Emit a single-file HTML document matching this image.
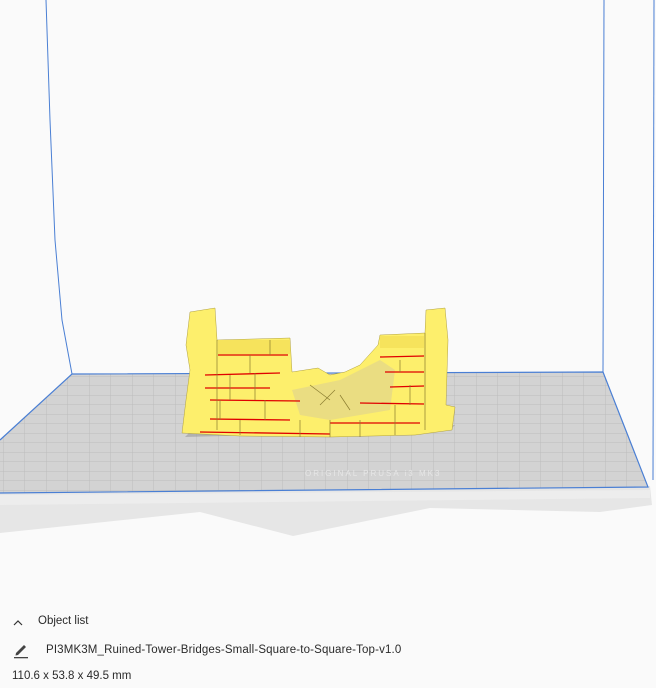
<!DOCTYPE html>
<html><head><meta charset="utf-8"><style>
html,body{margin:0;padding:0;background:#fafafa;width:656px;height:688px;overflow:hidden;font-family:"Liberation Sans","DejaVu Sans",sans-serif;}
.t{position:absolute;font-size:11.5px;color:#2a2a2a;white-space:nowrap;}
</style></head><body>
<svg width="656" height="688" style="position:absolute;left:0;top:0">
<defs>
<pattern id="g" width="21.5" height="9.5" patternUnits="userSpaceOnUse" x="3" y="376">
<rect width="21.5" height="9.5" fill="#d3d3d3"/>
<path d="M0 0H21.5M0 0V9.5" stroke="#bcbcbc" stroke-width="1"/>
</pattern>
</defs>
<polygon points="0,490 650,486 652,505 600,512 430,508 293,536 200,512 0,533" fill="#e6e6e6"/>
<polygon points="0,495 650,490 650,498 0,505" fill="#ededed"/>
<polygon points="72,374 603,372 648,487 0,493 0,440" fill="url(#g)"/>
<polyline points="0,440 72,374 603,372 648,487 0,493" fill="none" stroke="#4a7fd4" stroke-width="1.2"/>
<polyline points="46,0 50,120 55,240 62,320 72,374" fill="none" stroke="#4a7fd4" stroke-width="1"/>
<line x1="604" y1="0" x2="603" y2="372" stroke="#4a7fd4" stroke-width="1"/>
<line x1="654" y1="0" x2="653" y2="480" stroke="#4a7fd4" stroke-width="1"/>
<text x="305" y="476" font-size="8" fill="#e6e6e6" letter-spacing="2" font-family="Liberation Sans">ORIGINAL PRUSA i3 MK3</text>
<polygon points="185,437 450,430 455,425 190,432" fill="#8f8f8f" opacity="0.5"/>
<polygon points="190,312 215,308 217,340 290,338 292,372 318,368 330,375 345,372 360,365 378,345 380,335 425,333 426,310 445,308 448,340 446,405 455,407 452,430 415,435 330,437 240,436 182,433 186,400 190,370 186,345" fill="#fdef6c" stroke="#b0a040" stroke-width="0.5"/>
<g fill="#f6e35c">
<rect x="218" y="340" width="72" height="14"/>
<rect x="380" y="336" width="44" height="12"/>
<polygon points="292,390 340,380 380,360 395,370 390,410 330,420 300,415" fill="#eadd82"/>
</g>
<g stroke="#e00000" stroke-width="1.3">
<line x1="218" y1="355" x2="288" y2="355"/>
<line x1="205" y1="375" x2="280" y2="373"/>
<line x1="205" y1="388" x2="270" y2="388"/>
<line x1="210" y1="400" x2="300" y2="401"/>
<line x1="210" y1="419" x2="290" y2="420"/>
<line x1="330" y1="423" x2="420" y2="423"/>
<line x1="380" y1="357" x2="424" y2="356"/>
<line x1="385" y1="372" x2="424" y2="372"/>
<line x1="390" y1="387" x2="424" y2="386"/>
<line x1="360" y1="403" x2="424" y2="404"/>
<line x1="200" y1="432" x2="330" y2="434"/>
</g>
<g stroke="#8a7c30" stroke-width="0.7" fill="none">
<path d="M230 375V400M255 373V400M220 400V420M265 400V420M240 420V435M300 420V437M330 420V437M360 420V437M395 405V435M410 385V405M400 360V372M250 355V373M270 340V355M310 385L330 400M340 395L350 410M320 405L335 390"/>
<path d="M217 340V430M425 333V430"/>
</g>
<path d="M14 625 L18 621 L22 625" fill="none" stroke="#333" stroke-width="1.2"/>
<path d="M16 653 L24 645 L26 647 L18 655 L15.5 655.5 Z" fill="#444"/>
<rect x="14" y="657" width="14" height="1.3" fill="#444"/>
</svg>
<div class="t" style="left:38px;top:615px;">Object list</div>
<div class="t" style="left:46px;top:644px;letter-spacing:0.15px;">PI3MK3M_Ruined-Tower-Bridges-Small-Square-to-Square-Top-v1.0</div>
<div class="t" style="left:12px;top:670px;">110.6 x 53.8 x 49.5 mm</div>
</body></html>
